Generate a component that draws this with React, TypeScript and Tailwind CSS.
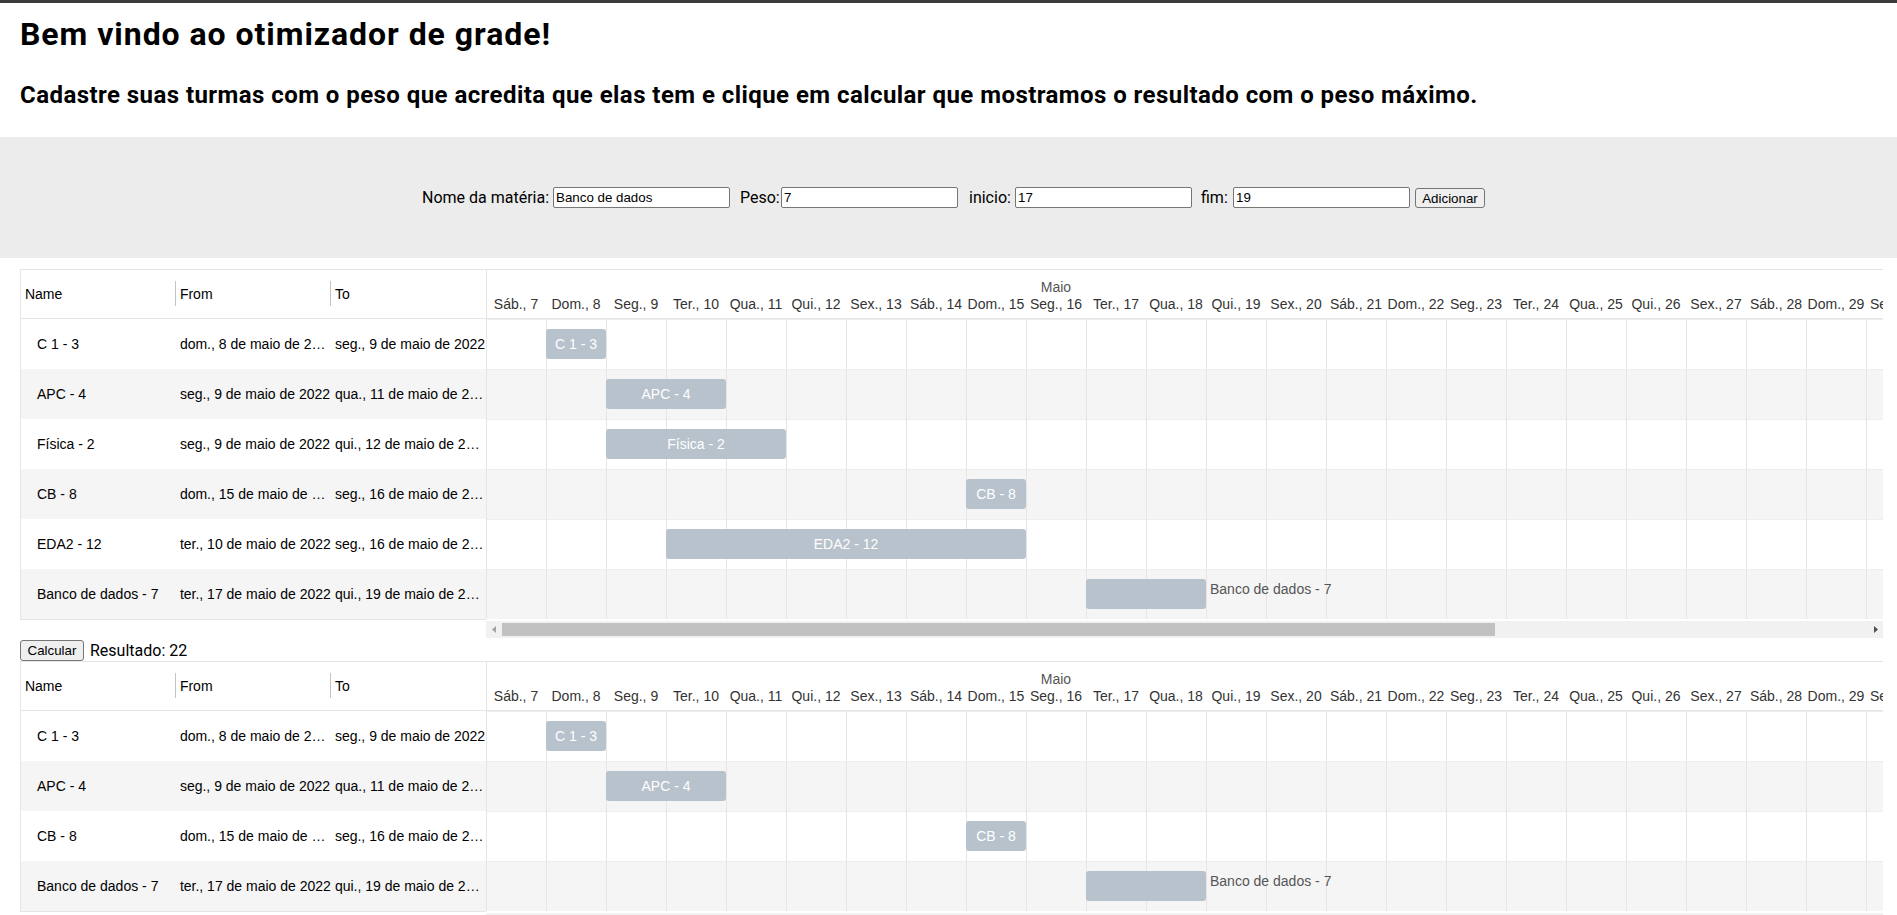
import React from 'react';

type Task = {
  name: string;
  from: string;
  to: string;
  start: number;
  end: number;
  outside?: boolean;
};

const C13: Task = { name: 'C 1 - 3', from: 'dom., 8 de maio de 2022', to: 'seg., 9 de maio de 2022', start: 1, end: 2 };
const APC: Task = { name: 'APC - 4', from: 'seg., 9 de maio de 2022', to: 'qua., 11 de maio de 2022', start: 2, end: 4 };
const FIS: Task = { name: 'Física - 2', from: 'seg., 9 de maio de 2022', to: 'qui., 12 de maio de 2022', start: 2, end: 5 };
const CB: Task = { name: 'CB - 8', from: 'dom., 15 de maio de 2022', to: 'seg., 16 de maio de 2022', start: 8, end: 9 };
const EDA: Task = { name: 'EDA2 - 12', from: 'ter., 10 de maio de 2022', to: 'seg., 16 de maio de 2022', start: 3, end: 9 };
const BD: Task = { name: 'Banco de dados - 7', from: 'ter., 17 de maio de 2022', to: 'qui., 19 de maio de 2022', start: 10, end: 12, outside: true };

const ALL = [C13, APC, FIS, CB, EDA, BD];
const RESULT = [C13, APC, CB, BD];

const COL = 60;
const NCOLS = 28;
const W = COL * NCOLS;
const DAY_NAMES = ['Dom.', 'Seg.', 'Ter.', 'Qua.', 'Qui.', 'Sex.', 'Sáb.'];

function dayLabel(i: number) {
  let d = 7 + i;
  if (d > 31) d -= 31;
  const wd = (6 + i) % 7;
  return `${DAY_NAMES[wd]}, ${d}`;
}

const ARIAL = "'Liberation Sans', Arial, sans-serif";

function Chart({ tasks }: { tasks: Task[] }) {
  const h = 50 + tasks.length * 50;
  return (
    <svg width={W} height={h} fontFamily={ARIAL} fontSize={14} className="block">
      {tasks.map((t, i) => (
        <rect key={'r' + t.name} x={0} y={50 + i * 50} width={W} height={50} fill={i % 2 ? '#f5f5f5' : '#ffffff'} />
      ))}
      {tasks.map((t, i) => (
        <line key={'l' + t.name} x1={0} x2={W} y1={50 + i * 50 + 0.5} y2={50 + i * 50 + 0.5} stroke="#ebeff2" />
      ))}
      {Array.from({ length: NCOLS + 1 }).map((_, i) => (
        <line key={'t' + i} x1={i * COL + 0.5} x2={i * COL + 0.5} y1={i === 0 ? 0 : 50} y2={h} stroke="#e6e4e4" />
      ))}
      <line x1={0} x2={W} y1={0.5} y2={0.5} stroke="#e4e2e2" />
      <line x1={0} x2={W} y1={49.5} y2={49.5} stroke="#e4e2e2" />
      <text x={570} y={22.5} fill="#555" textAnchor="middle">
        Maio
      </text>
      {Array.from({ length: NCOLS }).map((_, i) => (
        <text key={'d' + i} x={i * COL + 30} y={40} fill="#333" textAnchor="middle">
          {dayLabel(i)}
        </text>
      ))}
      {tasks.map((t, i) => {
        const x = t.start * COL;
        const w = (t.end - t.start) * COL;
        const y = 50 + i * 50 + 10;
        return (
          <g key={'b' + t.name}>
            <rect x={x} y={y} width={w} height={30} rx={3} ry={3} fill="#b8c2cc" />
            {t.outside ? (
              <text x={x + w + 4} y={y + 15} fill="#555">
                {t.name}
              </text>
            ) : (
              <text x={x + w / 2} y={y + 15} fill="#fff" textAnchor="middle" dominantBaseline="central">
                {t.name}
              </text>
            )}
          </g>
        );
      })}
    </svg>
  );
}

function TaskTable({ tasks }: { tasks: Task[] }) {
  return (
    <div className="w-[466px] shrink-0 font-['Liberation_Sans',Arial,sans-serif] text-[14px] text-black">
      <div className="flex h-[50px] items-center border-y border-l border-[#e6e4e4]">
        <div className="w-[155px] shrink-0">{'\u00a0'}Name</div>
        <div className="-ml-px h-[25px] w-0 shrink-0 self-start mt-[11px] border-r border-[#c4c4c4]" />
        <div className="w-[155px] shrink-0">{'\u00a0'}From</div>
        <div className="-ml-px h-[25px] w-0 shrink-0 self-start mt-[11px] border-r border-[#c4c4c4]" />
        <div className="w-[155px] shrink-0">{'\u00a0'}To</div>
      </div>
      <div className="border-b border-l border-[#e6e4e4]">
        {tasks.map((t, i) => (
          <div key={t.name} className={`flex h-[50px] items-center ${i % 2 ? 'bg-[#f5f5f5]' : 'bg-white'}`}>
            <div className="w-[155px] shrink-0 truncate pl-[16px]">{t.name}</div>
            <div className="w-[155px] shrink-0 truncate">{'\u00a0' + t.from}</div>
            <div className="w-[155px] shrink-0 truncate">{'\u00a0' + t.to}</div>
          </div>
        ))}
      </div>
    </div>
  );
}

function HScroll() {
  return (
    <div className="ml-[466px] h-[20px] w-[1397px] pt-px">
      <div className="flex h-[17px] w-full items-center bg-[#f1f1f1]">
        <div className="flex h-[17px] w-[15px] shrink-0 items-center justify-center">
          <svg width="4" height="7" viewBox="0 0 4 7">
            <path d="M4 0 L0 3.5 L4 7 Z" fill="#a3a3a3" />
          </svg>
        </div>
        <div className="ml-px h-[13px] w-[993px] bg-[#c1c1c1]" />
        <div className="flex-1" />
        <div className="flex h-[17px] w-[15px] shrink-0 items-center justify-center">
          <svg width="4" height="7" viewBox="0 0 4 7">
            <path d="M0 0 L4 3.5 L0 7 Z" fill="#505050" />
          </svg>
        </div>
      </div>
    </div>
  );
}

function Gantt({ tasks }: { tasks: Task[] }) {
  return (
    <div className="w-[1863px]">
      <div className="flex items-start">
        <TaskTable tasks={tasks} />
        <div className="w-[1397px] shrink-0 overflow-hidden">
          <Chart tasks={tasks} />
        </div>
      </div>
      <HScroll />
    </div>
  );
}

const inputCls =
  "h-[21px] w-[177px] shrink-0 rounded-[2px] border border-[#767676] bg-white px-[2px] font-['Liberation_Sans',Arial,sans-serif] text-[13.33px] text-black outline-none";

export default function App() {
  return (
    <div className="h-[915px] overflow-hidden bg-white font-['Roboto',sans-serif] text-black">
      <div className="h-[3px] bg-[#3b3b3b]" />
      <div className="pl-[20px]">
        <h1 className="mt-[15px] text-[32px] font-bold leading-[32px] tracking-[0.95px]">Bem vindo ao otimizador de grade!</h1>
        <h2 className="mt-[33px] text-[24px] font-bold leading-[24px] tracking-[0.44px]">
          Cadastre suas turmas com o peso que acredita que elas tem e clique em calcular que mostramos o resultado com o peso máximo.
        </h2>
      </div>
      <div className="mt-[30px] flex h-[121px] items-center bg-[#ececec] pl-[422px] text-[16px]">
        <span className="w-[131px] shrink-0">Nome da matéria:</span>
        <input className={inputCls} defaultValue="Banco de dados" />
        <span className="ml-[10px] w-[41px] shrink-0">Peso:</span>
        <input className={inputCls} defaultValue="7" />
        <span className="ml-[11px] w-[46px] shrink-0">inicio:</span>
        <input className={inputCls} defaultValue="17" />
        <span className="ml-[9px] w-[32px] shrink-0">fim:</span>
        <input className={inputCls} defaultValue="19" />
        <button className="ml-[5px] h-[20px] w-[70px] shrink-0 rounded-[3px] border border-[#767676] bg-[#efefef] font-['Liberation_Sans',Arial,sans-serif] text-[13.33px] text-black">
          Adicionar
        </button>
      </div>
      <div className="pl-[20px] pt-[11px]">
        <Gantt tasks={ALL} />
        <div className="flex h-[21px] items-center">
          <button className="h-[21px] w-[64px] shrink-0 rounded-[3px] border border-[#767676] bg-[#efefef] font-['Liberation_Sans',Arial,sans-serif] text-[13.33px] text-black">
            Calcular
          </button>
          <span className="ml-[6px] text-[16px]">Resultado: 22</span>
        </div>
        <Gantt tasks={RESULT} />
      </div>
    </div>
  );
}
